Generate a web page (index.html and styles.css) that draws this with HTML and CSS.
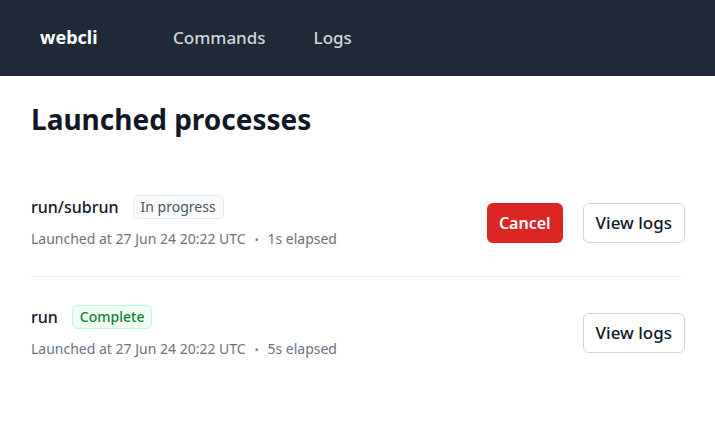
FILE: index.html
```html
<!DOCTYPE html>
<html lang="en">
<head>
<meta charset="utf-8">
<title>webcli</title>
<link rel="stylesheet" href="styles.css">
</head>
<body>
<nav class="nav">
  <span class="brand">webcli</span>
  <a class="nav-link" href="#">Commands</a>
  <a class="nav-link" href="#">Logs</a>
</nav>
<main class="main">
  <h1 class="title">Launched processes</h1>
  <ul class="list">
    <li class="row">
      <div class="info">
        <div class="head">
          <span class="name">run/subrun</span>
          <span class="badge badge-gray">In progress</span>
        </div>
        <div class="meta">Launched at 27 Jun 24 20:22 UTC<span class="dot">•</span>1s elapsed</div>
      </div>
      <div class="actions">
        <button class="btn btn-danger">Cancel</button>
        <button class="btn btn-light">View logs</button>
      </div>
    </li>
    <li class="row">
      <div class="info">
        <div class="head">
          <span class="name">run</span>
          <span class="badge badge-green">Complete</span>
        </div>
        <div class="meta">Launched at 27 Jun 24 20:22 UTC<span class="dot">•</span>5s elapsed</div>
      </div>
      <div class="actions">
        <button class="btn btn-light">View logs</button>
      </div>
    </li>
  </ul>
</main>
</body>
</html>
```

FILE: styles.css
```css
* { box-sizing: border-box; }
body {
  margin: 0;
  font-family: "Noto Sans", "Open Sans", sans-serif;
  background: #ffffff;
  color: #111827;
}
.nav {
  height: 76px;
  background: #1f2937;
  display: flex;
  align-items: center;
  padding-left: 40px;
  padding-bottom: 2px;
}
.brand {
  color: #ffffff;
  font-weight: 700;
  font-size: 18px;
  width: 133px;
}
.nav-link {
  color: #d1d5db;
  font-weight: 500;
  font-size: 17px;
  text-decoration: none;
  margin-right: 48px;
}
.main {
  padding: 0 30px 0 31px;
}
.title {
  margin: 0;
  padding-top: 25px;
  font-size: 28px;
  line-height: 36px;
  font-weight: 700;
  color: #111827;
}
.list {
  list-style: none;
  margin: 30px 0 0;
  padding: 0;
}
.row {
  display: flex;
  align-items: center;
  justify-content: space-between;
  padding: 28px 0 26px;
  border-bottom: 1px solid #f3f4f6;
}
.row:last-child { border-bottom: none; padding-top: 28px; }
.head {
  display: flex;
  align-items: center;
  gap: 14px;
}
.name {
  font-size: 16px;
  font-weight: 500;
  color: #111827;
}
.badge {
  font-size: 14px;
  line-height: 22px;
  padding: 0 7px;
  border-radius: 6px;
  border: 1px solid;
}
.badge-gray {
  background: #f9fafb;
  border-color: #e5e7eb;
  color: #4b5563;
}
.badge-green {
  background: #f0fdf4;
  border-color: #bbf7d0;
  color: #15803d;
  font-weight: 500;
}
.meta {
  margin-top: 10px;
  font-size: 14px;
  line-height: 20px;
  color: #6b7280;
}
.dot {
  margin: 0 9px;
  font-size: 10px;
}
.actions {
  display: flex;
  gap: 20px;
}
.btn {
  font-family: inherit;
  height: 40px;
  border-radius: 6px;
  padding: 0 12px;
  cursor: pointer;
}
.btn-danger {
  background: #dc2626;
  color: #ffffff;
  border: none;
  font-size: 16px;
  font-weight: 600;
}
.btn-light {
  background: #ffffff;
  color: #111827;
  border: 1px solid #d1d5db;
  font-size: 17px;
  font-weight: 500;
}
```
